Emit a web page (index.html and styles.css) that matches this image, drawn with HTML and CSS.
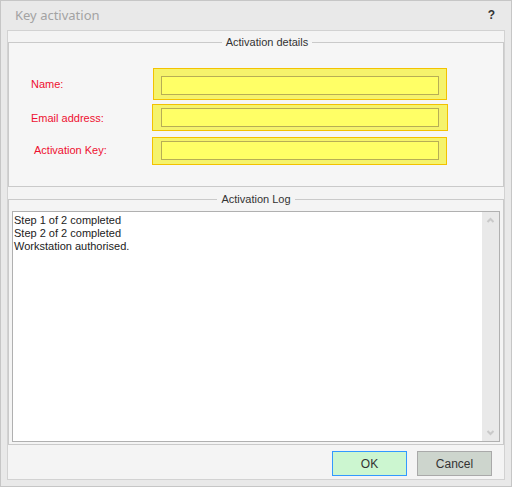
FILE: index.html
```html
<!DOCTYPE html>
<html>
<head>
<meta charset="utf-8">
<link rel="stylesheet" href="styles.css">
</head>
<body>
<div class="window">
  <div class="titlebar">
    <span class="title">Key activation</span>
    <span class="help">?</span>
  </div>
  <div class="panel">
    <fieldset class="group details">
      <legend>Activation details</legend>
      <div class="form">
        <label class="lbl">Name:</label>
        <div class="hl hl-name"><div class="inp"></div></div>
        <label class="lbl">Email address:</label>
        <div class="hl hl-email"><div class="inp"></div></div>
        <label class="lbl lbl-key">Activation Key:</label>
        <div class="hl hl-key"><div class="inp"></div></div>
      </div>
    </fieldset>
    <fieldset class="group log">
      <legend>Activation Log</legend>
      <div class="logbox">
        <div class="logtext">Step 1 of 2 completed<br>Step 2 of 2 completed<br>Workstation authorised.</div>
        <div class="scroll">
          <svg width="17" height="17" viewBox="0 0 17 17"><polyline points="5.5,10 8.5,7 11.5,10" fill="none" stroke="#c9c9c9" stroke-width="2"/></svg>
          <svg width="17" height="17" viewBox="0 0 17 17"><polyline points="5.5,7 8.5,10 11.5,7" fill="none" stroke="#c9c9c9" stroke-width="2"/></svg>
        </div>
      </div>
    </fieldset>
    <div class="buttons">
      <button class="btn ok">OK</button>
      <button class="btn cancel">Cancel</button>
    </div>
  </div>
</div>
</body>
</html>
```

FILE: styles.css
```css
html, body {
  margin: 0;
  padding: 0;
}
body {
  width: 512px;
  height: 487px;
  overflow: hidden;
  font-family: "Liberation Sans", sans-serif;
}
.window {
  width: 512px;
  height: 487px;
  box-sizing: border-box;
  border: 1px solid #c6c6c6;
  background: #e9e9e9;
  display: flex;
  flex-direction: column;
}
.titlebar {
  height: 29px;
  flex: none;
  display: flex;
  align-items: center;
  justify-content: space-between;
  padding: 0 16px 1px 14px;
  box-sizing: border-box;
}
.title {
  font-family: "Noto Sans", sans-serif;
  font-size: 13px;
  color: #a3a3a3;
}
.help {
  font-weight: bold;
  font-size: 12px;
  color: #333;
}
.panel {
  margin: 0 6px;
  height: 450px;
  flex: none;
  box-sizing: border-box;
  border: 1px solid #d2d2d2;
  background: #f4f4f4;
  display: flex;
  flex-direction: column;
}
.group {
  margin: 0;
  border: 1px solid #cacaca;
  min-width: 0;
}
.group legend {
  margin: 0 auto;
  padding: 0 4px;
  font-size: 11px;
  line-height: 14px;
  color: #333;
}
.details {
  margin-top: 4px;
  background: #f6f6f6;
  padding: 19px 0 21px 22px;
}
.form {
  display: grid;
  grid-template-columns: 121px auto;
  row-gap: 4px;
  align-items: center;
  justify-items: start;
}
.lbl {
  font-size: 11px;
  color: #ee1030;
}
.lbl-key {
  margin-left: 3px;
}
.hl {
  box-sizing: border-box;
  border: 1px solid #f3c200;
  background: #f5f36c;
}
.inp {
  height: 19px;
  box-sizing: border-box;
  border: 1px solid #b7ae55;
  background: #ffff66;
  width: 278px;
}
.hl-name {
  margin-left: 1px;
  padding: 7px 7px 4px 7px;
}
.hl-email {
  padding: 3px 8px;
}
.hl-key {
  margin-top: 2px;
  padding: 3px 7px 4px 8px;
}
.log {
  margin-top: 5px;
  padding: 5px 3px 2px 3px;
}
.logbox {
  height: 231px;
  box-sizing: border-box;
  border: 1px solid #b0b0b0;
  background: #fff;
  display: flex;
}
.logtext {
  flex: 1;
  padding: 2px 0 0 1px;
  font-size: 11px;
  line-height: 13px;
  color: #222;
}
.scroll {
  width: 17px;
  background: #e9e9e9;
  display: flex;
  flex-direction: column;
  justify-content: space-between;
}
.scroll svg {
  display: block;
}
.buttons {
  height: 34px;
  flex: none;
  box-sizing: border-box;
  padding: 6px 12px 0 0;
  display: flex;
  justify-content: flex-end;
  align-items: flex-start;
  gap: 10px;
}
.btn {
  width: 75px;
  height: 25px;
  box-sizing: border-box;
  font-family: "Liberation Sans", sans-serif;
  font-size: 12px;
  color: #333;
  padding: 0;
}
.ok {
  border: 1px solid #3399ff;
  background: #ccf6d0;
}
.cancel {
  border: 1px solid #a9a9a9;
  background: #cdd5cd;
}
```
